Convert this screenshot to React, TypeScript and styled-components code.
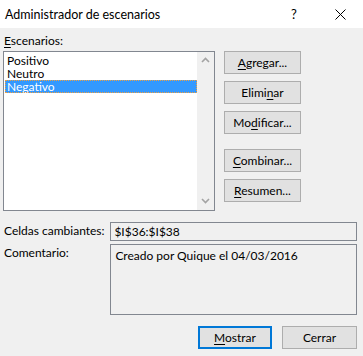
import React from 'react';
import styled, { createGlobalStyle } from 'styled-components';

const GlobalStyle = createGlobalStyle`
  html, body {
    margin: 0;
    padding: 0;
    background: #f0f0f0;
  }
  body {
    font-family: Lato, "Liberation Sans", sans-serif;
    font-size: 12px;
    color: #000;
  }
`;

const Dialog = styled.div`
  width: 363px;
  height: 356px;
  background: #f0f0f0;
  display: flex;
  flex-direction: column;
  overflow: hidden;
`;

const TitleBar = styled.div`
  height: 28px;
  background: #fff;
  display: flex;
  align-items: center;
  padding-left: 5px;
`;

const Title = styled.div`
  flex: 1;
  font-size: 12.5px;
  white-space: nowrap;
`;

const TitleButton = styled.div`
  width: 46px;
  height: 28px;
  display: flex;
  align-items: center;
  justify-content: center;
  font-size: 13px;
`;

const Body = styled.div`
  padding: 5px 6px 0 3px;
  display: flex;
  flex-direction: column;
`;

const Top = styled.div`
  display: grid;
  grid-template-columns: 212px 77px;
  column-gap: 9px;
  row-gap: 3px;
`;

const Label = styled.div`
  height: 15px;
  line-height: 15px;
  padding-left: 1px;
  white-space: nowrap;
`;

const Key = styled.span`
  text-decoration: underline;
  text-underline-offset: 2px;
`;

const ListBox = styled.div`
  height: 160px;
  box-sizing: border-box;
  border: 1px solid #828790;
  background: #fff;
  display: flex;
`;

const Items = styled.div`
  flex: 1;
  padding: 2px 0 0 1px;
`;

const Item = styled.div<{ $selected?: boolean }>`
  height: 13px;
  line-height: 13px;
  padding-left: 2px;
  box-sizing: border-box;
  white-space: nowrap;
  background: ${p => (p.$selected ? '#3399ff' : 'transparent')};
  color: ${p => (p.$selected ? '#fff' : '#000')};
  outline: ${p => (p.$selected ? '1px dotted #f0a040' : 'none')};
  outline-offset: -1px;
`;

const ScrollBar = styled.div`
  width: 17px;
  background: #f0f0f0;
  display: flex;
  flex-direction: column;
  justify-content: space-between;
  align-items: center;
  padding: 5px 0 6px;
`;

const ButtonColumn = styled.div`
  display: flex;
  flex-direction: column;
  gap: 7px;
`;

const Button = styled.button<{ $gapBefore?: boolean; $default?: boolean }>`
  height: 23px;
  box-sizing: border-box;
  background: #e1e1e1;
  border: ${p => (p.$default ? '2px solid #0078d7' : '1px solid #adadad')};
  font-family: inherit;
  font-size: 12px;
  color: #000;
  padding: 0;
  margin: 0;
  margin-top: ${p => (p.$gapBefore ? '8px' : '0')};
  line-height: 1;
  white-space: nowrap;
`;

const FieldRow = styled.div<{ $top: number }>`
  display: flex;
  margin-top: ${p => p.$top}px;
`;

const FieldLabel = styled.div`
  width: 107px;
  padding-left: 1px;
  line-height: 18px;
  white-space: nowrap;
`;

const Field = styled.div<{ $height: number; $pad: string }>`
  width: 248px;
  height: ${p => p.$height}px;
  box-sizing: border-box;
  border: 1px solid #828790;
  padding: ${p => p.$pad};
  line-height: 15px;
  white-space: nowrap;
`;

const Footer = styled.div`
  display: flex;
  justify-content: flex-end;
  gap: 10px;
  margin-top: 11px;
`;

const Chevron = ({ up }: { up?: boolean }) => (
  <svg width="9" height="6" viewBox="0 0 9 6">
    <path
      d={up ? 'M1 5 L4.5 1.5 L8 5' : 'M1 1 L4.5 4.5 L8 1'}
      fill="none"
      stroke="#a3a3a3"
      strokeWidth="1.6"
    />
  </svg>
);

export default function App() {
  return (
    <>
      <GlobalStyle />
      <Dialog>
        <TitleBar>
          <Title>Administrador de escenarios</Title>
          <TitleButton>?</TitleButton>
          <TitleButton>
            <svg width="11" height="11" viewBox="0 0 11 11">
              <path d="M0.5 0.5 L10.5 10.5 M10.5 0.5 L0.5 10.5" stroke="#000" strokeWidth="1" />
            </svg>
          </TitleButton>
        </TitleBar>
        <Body>
          <Top>
            <Label>
              <Key>E</Key>scenarios:
            </Label>
            <div />
            <ListBox>
              <Items>
                <Item>Positivo</Item>
                <Item>Neutro</Item>
                <Item $selected>Negativo</Item>
              </Items>
              <ScrollBar>
                <Chevron up />
                <Chevron />
              </ScrollBar>
            </ListBox>
            <ButtonColumn>
              <Button><Key>A</Key>gregar...</Button>
              <Button>Elimi<Key>n</Key>ar</Button>
              <Button>Mo<Key>d</Key>ificar...</Button>
              <Button $gapBefore><Key>C</Key>ombinar...</Button>
              <Button><Key>R</Key>esumen...</Button>
            </ButtonColumn>
          </Top>
          <FieldRow $top={11}>
            <FieldLabel>Celdas cambiantes:</FieldLabel>
            <Field $height={19} $pad="1px 3px">$I$36:$I$38</Field>
          </FieldRow>
          <FieldRow $top={3}>
            <FieldLabel>Comentario:</FieldLabel>
            <Field $height={71} $pad="3px 4px">
              Creado por Quique el 04/03/2016
            </Field>
          </FieldRow>
          <Footer>
            <Button $default style={{ width: 74 }}><Key>M</Key>ostrar</Button>
            <Button style={{ width: 75 }}>Cerrar</Button>
          </Footer>
        </Body>
      </Dialog>
    </>
  );
}
